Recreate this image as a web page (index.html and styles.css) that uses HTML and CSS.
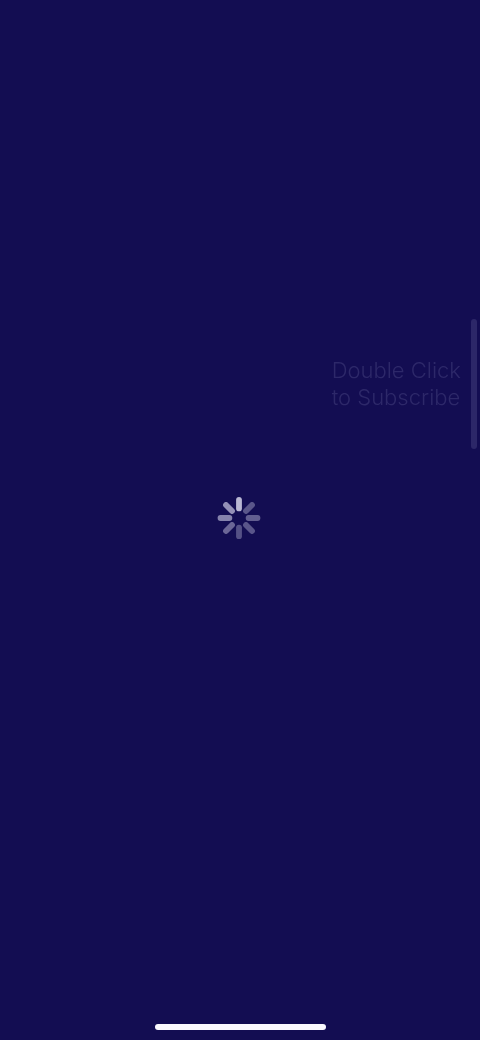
FILE: index.html
```html
<!DOCTYPE html>
<html lang="en">
<head>
<meta charset="utf-8">
<title>Loading</title>
<link rel="stylesheet" href="styles.css">
</head>
<body>
<main class="screen">
  <aside class="side">
    <p class="hint">Double Click<br>to Subscribe</p>
    <div class="track"></div>
  </aside>
  <svg class="spinner" width="44" height="44" viewBox="-22 -22 44 44" aria-label="Loading">
    <g stroke-width="5.800" stroke-linecap="round">
      <line class="s0" x1="0" y1="-9.600" x2="0" y2="-18.200"/>
      <line class="s1" x1="-7" y1="-7" x2="-13" y2="-13"/>
      <line class="s2" x1="-9.600" y1="0" x2="-18.500" y2="0"/>
      <line class="s3" x1="-7" y1="7" x2="-13" y2="13"/>
      <line class="s4" x1="0" y1="9.600" x2="0" y2="18.200"/>
      <line class="s5" x1="7" y1="7" x2="13" y2="13"/>
      <line class="s6" x1="9.600" y1="0" x2="18.500" y2="0"/>
      <line class="s7" x1="7" y1="-7" x2="13" y2="-13"/>
    </g>
  </svg>
  <div class="home"></div>
</main>
</body>
</html>
```
FILE: styles.css
```css
html, body {
  margin: 0;
  padding: 0;
  background: #130d52;
}

.screen {
  position: relative;
  width: 480px;
  height: 1040px;
  overflow: hidden;
  background: #130d52;
}

.side {
  position: absolute;
  top: 319px;
  right: 3px;
  display: flex;
  align-items: flex-start;
  gap: 10px;
}

.hint {
  margin: 38px 0 0;
  font-family: Inter, "Liberation Sans", sans-serif;
  font-size: 22px;
  font-weight: 300;
  line-height: 27px;
  color: #2d2869;
  filter: blur(0.4px);
}

.track {
  width: 6px;
  height: 130px;
  border-radius: 3px;
  background: #2c2768;
}

.spinner {
  position: absolute;
  left: 216.500px;
  top: 496px;
  filter: blur(0.4px);
}

.spinner line { stroke: #e4e3f6; }
.s0 { opacity: 0.8; }
.s1 { opacity: 0.62; }
.s2 { opacity: 0.55; }
.s3 { opacity: 0.42; }
.s4 { opacity: 0.32; }
.s5 { opacity: 0.34; }
.s6 { opacity: 0.38; }
.s7 { opacity: 0.34; }

.home {
  position: absolute;
  left: 155px;
  bottom: 10px;
  width: 171px;
  height: 6px;
  border-radius: 3px;
  background: #fbfaff;
}
```
